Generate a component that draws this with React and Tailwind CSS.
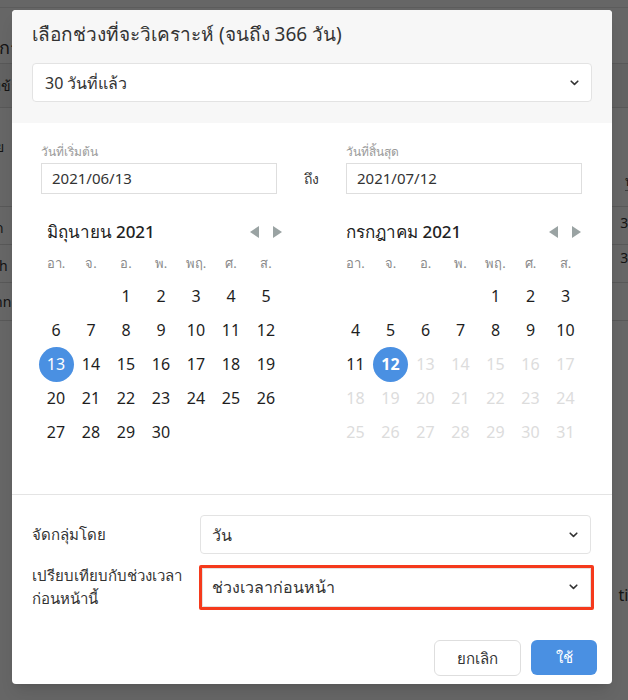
import React from "react";

const FONT = { fontFamily: '"Noto Sans", "Open Sans", "DejaVu Sans", sans-serif' };

function Chevron() {
  return (
    <svg width="9" height="6" viewBox="0 0 9 6" className="shrink-0">
      <path d="M1.2 1.2 L4.5 4.4 L7.8 1.2" fill="none" stroke="#333" strokeWidth="1.6" strokeLinecap="round" strokeLinejoin="round" />
    </svg>
  );
}

function Arrows() {
  return (
    <div className="flex items-center gap-[14px]">
      <svg width="9" height="12" viewBox="0 0 9 12"><path d="M9 0 L0 6 L9 12 Z" fill="#9aa3a3" /></svg>
      <svg width="9" height="12" viewBox="0 0 9 12"><path d="M0 0 L9 6 L0 12 Z" fill="#9aa3a3" /></svg>
    </div>
  );
}

const WEEK = ["อา.", "จ.", "อ.", "พ.", "พฤ.", "ศ.", "ส."];

function Calendar({ title, offset, days, selected, maxEnabled }) {
  const cells = [];
  for (let i = 0; i < offset; i++) cells.push(null);
  for (let d = 1; d <= days; d++) cells.push(d);
  return (
    <div className="w-[245px]">
      <div className="flex items-center justify-between h-[24px] pl-[8px] pr-[2px]">
        <span className="text-[17px] font-medium text-[#222]">{title}</span>
        <Arrows />
      </div>
      <div className="grid grid-cols-7 h-[20px] mt-[10px] items-center">
        {WEEK.map((w) => (
          <span key={w} className="text-center text-[13px] text-[#8a8a8a]">{w}</span>
        ))}
      </div>
      <div className="grid grid-cols-7 mt-[5px]">
        {cells.map((d, i) => {
          if (d === null) return <span key={i} className="h-[34px]" />;
          const isSel = d === selected;
          const disabled = maxEnabled && d > maxEnabled;
          return (
            <div key={i} className="h-[34px] flex items-center justify-center">
              {isSel ? (
                <span className={`w-[35px] h-[35px] rounded-full bg-[#4a90e2] text-white flex items-center justify-center text-[16px] ${maxEnabled ? "font-bold" : ""}`}>
                  {d}
                </span>
              ) : (
                <span className={`text-[16px] ${disabled ? "text-[#dcdcdc]" : "text-[#1e1e1e]"}`}>{d}</span>
              )}
            </div>
          );
        })}
      </div>
    </div>
  );
}

function Background() {
  return (
    <div className="bg-white w-[628px] h-[700px] text-[#333] overflow-hidden flex flex-col">
      <div className="h-[24px] border-b border-[#e5e5e5] flex items-end gap-[40px] px-[38px] -mt-[16px] pb-[10px] text-[14px] leading-[14px] shrink-0">
        <span>ข้อมูลพื้นฐาน</span>
        <span>การแจ้งเตือน</span>
        <span className="ml-auto">ทดลองใช้</span>
      </div>
      <div className="h-[55px] shrink-0 flex items-end pb-[2px] -ml-[52px] text-[18px]">ตารางการวิเคราะห์</div>
      <div className="h-[45px] shrink-0 bg-[#f4f4f4] border-y border-[#ddd] flex items-center -ml-[16px] text-[14px]">รับข้อมูล</div>
      <div className="h-[99px] shrink-0 border-b border-[#ddd] flex flex-col text-[14px]">
        <div className="h-[27px]" />
        <div className="h-[22px] flex items-center -ml-[4px]">ย</div>
        <div className="h-[34px] flex items-end justify-between -ml-[14px] -mr-[22px]">
          <span className="font-bold">พื</span>
          <span className="border-b border-dashed border-[#999] leading-[18px]">ท้าย</span>
        </div>
      </div>
      <div className="h-[38px] shrink-0 border-b border-[#ddd] flex justify-between -ml-[14px] -mr-[16px] text-[14px]">
        <span className="mt-[10px]">ทัก</span><span className="mt-[5px]">3 (1</span>
      </div>
      <div className="h-[38px] shrink-0 border-b border-[#ddd] flex justify-between -ml-[6px] -mr-[16px] text-[14px]">
        <span className="mt-[10px]">th</span><span className="mt-[2px]">3 (1</span>
      </div>
      <div className="h-[38px] shrink-0 border-b border-[#ddd] flex items-center -ml-[6px] text-[14px]">nn</div>
      <div className="h-[262px] shrink-0" />
      <div className="flex justify-end -mr-[8px] text-[16px]">tic</div>
    </div>
  );
}

export default function App() {
  return (
    <div className="relative w-[628px] h-[700px] overflow-hidden" style={FONT}>
      <Background />
      <div className="absolute inset-0 bg-black/60" />
      <div className="absolute left-[12px] top-[10px] w-[600px] h-[674px] bg-white rounded-[4px] shadow-lg overflow-hidden flex flex-col text-[#333]">
        <div className="bg-[#f7f7f7] h-[113px] px-[20px] pt-[10px]">
          <div className="h-[28px] flex items-center text-[19px] text-[#333]">เลือกช่วงที่จะวิเคราะห์ (จนถึง 366 วัน)</div>
          <div className="mt-[15px] h-[39px] bg-white border border-[#e3e3e3] rounded-[4px] flex items-center justify-between pl-[12px] pr-[12px] text-[16px]">
            <span>30 วันที่แล้ว</span>
            <Chevron />
          </div>
        </div>

        <div className="h-[372px] border-b border-[#e4e4e4] pl-[26px] pr-[29px]">
          <div className="flex items-end pt-[19px] pl-[3px]">
            <div className="w-[236px]">
              <div className="text-[12px] text-[#9a9a9a] h-[20px] leading-[20px]">วันที่เริ่มต้น</div>
              <div className="mt-[1px] h-[31px] border border-[#dedede] flex items-center pl-[10px] text-[15px] text-[#333]">2021/06/13</div>
            </div>
            <div className="w-[69px] h-[31px] flex items-center justify-center text-[14px] text-[#333]">ถึง</div>
            <div className="w-[236px]">
              <div className="text-[12px] text-[#9a9a9a] h-[20px] leading-[20px]">วันที่สิ้นสุด</div>
              <div className="mt-[1px] h-[31px] border border-[#dedede] flex items-center pl-[10px] text-[15px] text-[#333]">2021/07/12</div>
            </div>
          </div>
          <div className="flex justify-between mt-[26px] pl-[0.5px]">
            <Calendar title="มิถุนายน 2021" offset={2} days={30} selected={13} />
            <Calendar title="กรกฎาคม 2021" offset={4} days={31} selected={12} maxEnabled={12} />
          </div>
        </div>

        <div className="px-[20px] pt-[20px] pr-[18px]">
          <div className="flex items-center">
            <div className="w-[168px] text-[15px] text-[#333]">จัดกลุ่มโดย</div>
            <div className="w-[391px] h-[39px] border border-[#e3e3e3] rounded-[4px] flex items-center justify-between pl-[11px] pr-[12px] text-[16px]">
              <span>วัน</span>
              <Chevron />
            </div>
          </div>
          <div className="flex items-center mt-[10px]">
            <div className="w-[167px] text-[15px] leading-[23px] text-[#333]">เปรียบเทียบกับช่วงเวลา<br />ก่อนหน้านี้</div>
            <div className="w-[395px] h-[45px] border-[3px] border-[#f53a1c] rounded-[2px]">
              <div className="h-full border border-[#e3e3e3] flex items-center justify-between pl-[9px] pr-[12px] text-[16px]">
                <span>ช่วงเวลาก่อนหน้า</span>
                <Chevron />
              </div>
            </div>
          </div>
          <div className="flex justify-end gap-[10px] mt-[30px] -mr-[3px]">
            <button className="w-[87px] h-[36px] border border-[#dedede] rounded-[6px] bg-white text-[15px] text-[#333]">ยกเลิก</button>
            <button className="w-[66px] h-[35px] rounded-[6px] bg-[#4a90e2] text-[15px] text-white">ใช้</button>
          </div>
        </div>
      </div>
    </div>
  );
}
